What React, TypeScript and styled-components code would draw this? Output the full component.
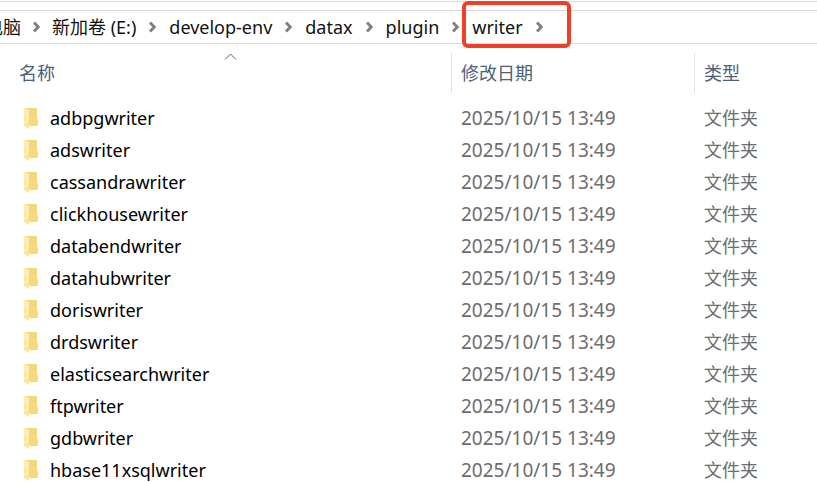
import React from "react";
import styled, { createGlobalStyle } from "styled-components";

const GlobalStyle = createGlobalStyle`
  *, *::before { box-sizing: border-box; }
  body {
    margin: 0;
    height: 100vh;
    overflow: hidden;
    background: #fff;
    color: #000;
    font-family: "Noto Sans", "Noto Sans CJK SC", sans-serif;
    font-size: 18px;
  }
`;

const Explorer = styled.main`
  padding-top: 1px;
`;

const AddressBar = styled.nav`
  height: 43px;
  padding-top: 8px;
  border-top: 1px solid #d9d9d9;
`;

const Path = styled.ol`
  display: flex;
  align-items: center;
  height: 34px;
  margin: 0;
  padding: 0;
  list-style: none;
  border-top: 1px solid #d9d9d9;
  border-bottom: 1px solid #d9d9d9;
`;

const Crumb = styled.li`
  position: relative;
  display: flex;
  flex: none;
  align-items: center;
  gap: 13px;
  padding-right: 13px;
  line-height: 32px;
  white-space: nowrap;

  &:first-child {
    gap: 12px;
    margin-left: -15px;
    padding-right: 12px;
  }
`;

const CrumbLink = styled.a`
  color: #111;
  text-decoration: none;
`;

const Highlight = styled.span`
  position: absolute;
  inset: -10px -15px -5px -10px;
  border: 4px solid #ee3f28;
  border-radius: 6px;
  pointer-events: none;
`;

const FileTable = styled.table`
  width: 100%;
  table-layout: fixed;
  border-collapse: collapse;
`;

const NameColumn = styled.col`
  width: 451px;
`;

const DateColumn = styled.col`
  width: 243px;
`;

const HeaderCell = styled.th`
  position: relative;
  height: 58px;
  padding: 0 0 0 10px;
  color: #4c607a;
  font-weight: 400;
  line-height: 24px;
  text-align: left;

  &:first-child {
    padding-left: 19px;
  }

  & + &::before {
    content: "";
    position: absolute;
    top: 9px;
    bottom: 9px;
    left: 0;
    border-left: 1px solid #e2e2e2;
  }
`;

const SortMark = styled.svg`
  position: absolute;
  top: 9px;
  left: 224px;
`;

const Cell = styled.td`
  height: 32px;
  padding: 0 0 0 10px;
  color: #6d6d6d;
  line-height: 24px;
  white-space: nowrap;
`;

const DateCell = styled(Cell)`
  font-size: 19px;
`;

const NameCell = styled(Cell)`
  padding-left: 24px;
  color: #000;
`;

const FileName = styled.span`
  display: flex;
  align-items: center;
  gap: 12px;
`;

const crumbs = ["电脑", "新加卷 (E:)", "develop-env", "datax", "plugin", "writer"];

const folders = [
  "adbpgwriter",
  "adswriter",
  "cassandrawriter",
  "clickhousewriter",
  "databendwriter",
  "datahubwriter",
  "doriswriter",
  "drdswriter",
  "elasticsearchwriter",
  "ftpwriter",
  "gdbwriter",
  "hbase11xsqlwriter",
];

function Chevron() {
  return (
    <svg width="7" height="12" viewBox="0 0 7 12" aria-hidden="true">
      <path d="M1 1.5 5.2 6 1 10.5" fill="none" stroke="#808080" strokeWidth="2.9" />
    </svg>
  );
}

function FolderIcon() {
  return (
    <svg width="14" height="22" viewBox="0 0 14 22" aria-hidden="true">
      <defs>
        <linearGradient id="folderBack" x1="0" y1="0" x2="1" y2="1">
          <stop offset="0" stopColor="#f3d480" />
          <stop offset="1" stopColor="#fadb7c" />
        </linearGradient>
        <linearGradient id="folderFlap" x1="0" y1="0" x2="0" y2="1">
          <stop offset="0" stopColor="#fff0b8" />
          <stop offset="1" stopColor="#fde494" />
        </linearGradient>
      </defs>
      <path d="M0 1h13v11h1v7H0z" fill="url(#folderBack)" />
      <path d="M0 1l5 2v19l-5-3z" fill="url(#folderFlap)" />
    </svg>
  );
}

export default function App() {
  return (
    <Explorer>
      <GlobalStyle />
      <AddressBar aria-label="路径">
        <Path>
          {crumbs.map((name, index) => (
            <Crumb key={name}>
              <CrumbLink href={`#${index}`}>{name}</CrumbLink>
              <Chevron />
              {index === crumbs.length - 1 && <Highlight />}
            </Crumb>
          ))}
        </Path>
      </AddressBar>
      <FileTable>
        <colgroup>
          <NameColumn />
          <DateColumn />
          <col />
        </colgroup>
        <thead>
          <tr>
            <HeaderCell scope="col" aria-sort="ascending">
              名称
              <SortMark width="13" height="8" viewBox="0 0 13 8" aria-hidden="true">
                <path d="M1 6.5 6.5 1 12 6.5" fill="none" stroke="#606060" />
              </SortMark>
            </HeaderCell>
            <HeaderCell scope="col">修改日期</HeaderCell>
            <HeaderCell scope="col">类型</HeaderCell>
          </tr>
        </thead>
        <tbody>
          {folders.map((name) => (
            <tr key={name}>
              <NameCell>
                <FileName>
                  <FolderIcon />
                  {name}
                </FileName>
              </NameCell>
              <DateCell>2025/10/15 13:49</DateCell>
              <Cell>文件夹</Cell>
            </tr>
          ))}
        </tbody>
      </FileTable>
    </Explorer>
  );
}
